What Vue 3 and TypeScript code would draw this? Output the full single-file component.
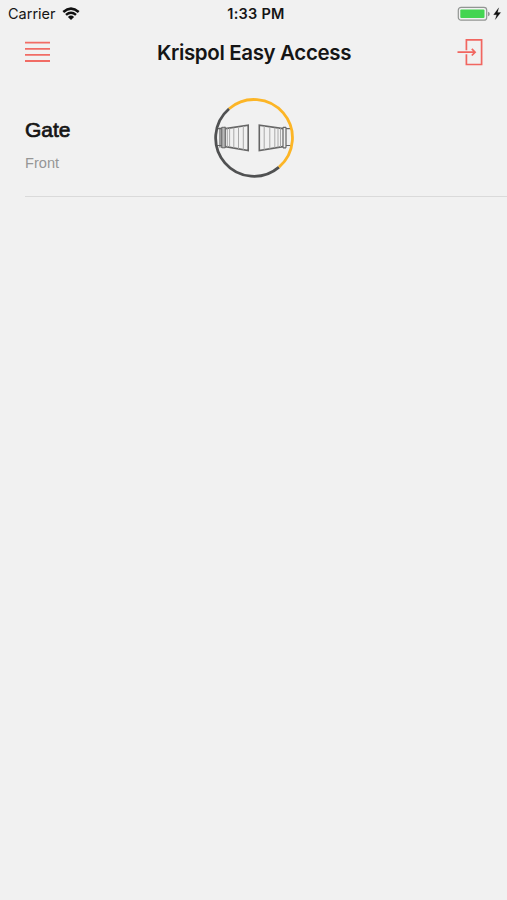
<script setup lang="ts">
interface Device {
  name: string
  location: string
}

const carrier: string = 'Carrier'
const time: string = '1:33 PM'
const title: string = 'Krispol Easy Access'
const devices: Device[] = [{ name: 'Gate', location: 'Front' }]
</script>

<template>
  <main class="screen">
    <div class="status">
      <div class="network">
        <span class="carrier">{{ carrier }}</span>
        <svg class="wifi" width="18" height="14" viewBox="0 0 18 14">
          <path d="M1.3 5Q9 -1.7 16.7 5M4 7.9Q9 3.7 14 7.9" fill="none" stroke="#111" stroke-width="2.5" />
          <path d="M5.9 9.9Q9 7.2 12.1 9.9L9 13Z" fill="#111" />
        </svg>
      </div>
      <span class="time">{{ time }}</span>
      <svg class="battery" width="46" height="16" viewBox="0 0 46 16">
        <rect x="1.3" y="1.4" width="28.4" height="12.8" rx="2.8" fill="#f1f1f1" stroke="#929593" stroke-width="1.2" />
        <rect x="3.3" y="3.5" width="24.2" height="8.6" rx="1" fill="#43d551" />
        <path d="M31 5.7Q32.8 6.2 32.8 8T31 10.3Z" fill="#929593" />
        <path d="M41.7 1.8L36.6 8.7H39.7L38.3 13.5L43.7 6.5H40.5Z" fill="#111" stroke="#111" stroke-width=".2" />
      </svg>
    </div>

    <header class="navbar">
      <button class="icon-button" aria-label="Menu">
        <svg width="25" height="22" viewBox="0 0 25 22">
          <path d="M0 1.7H25M0 7.8H25M0 13.9H25M0 20H25" stroke="#f16c65" stroke-width="1.8" />
        </svg>
      </button>
      <h1 class="title">{{ title }}</h1>
      <button class="icon-button" aria-label="Exit">
        <svg width="27" height="28" viewBox="0 0 27 28">
          <path d="M9.4 12.2V1.9H24.6V26.5H9.4V16.2M.5 14.2H18M14.8 10.9L18.1 14.2L14.8 17.5" fill="none" stroke="#f16660" stroke-width="1.7" />
        </svg>
      </button>
    </header>

    <section class="devices">
      <article v-for="device in devices" :key="device.name" class="device">
        <div class="labels">
          <h2 class="name">{{ device.name }}</h2>
          <p class="location">{{ device.location }}</p>
        </div>
        <svg class="gate" width="80" height="80" viewBox="0 0 80 80">
          <g fill="none" stroke="#656565">
            <path d="M2 30.7H8M2 47.5H8M6 29.5V49.5M11 28.8V50M8 29.2V50" stroke-width="1.2" />
            <path d="M7.8 29.3H11.2V49.8H7.8Z" fill="#b8b8b8" stroke-width="1" />
            <path d="M11.5 30.6L34.2 27.1V52.5L11.5 48.6" stroke-width="1.6" />
            <path d="M78 30.7H72M78 47.5H72M72 29.3V49.8M69 29.3V49.8M69 29.3H72M69 49.8H72" stroke-width="1.2" />
            <path d="M69 30.6L45.3 27.1V52.5L69 48.6" stroke-width="1.6" />
            <path d="M13.3 30.3V49M15.6 30.3V49M19.8 29.7V49.8M24.5 28.9V50.8M29.3 28.1V51.8M50.2 28.1V51.8M55.8 28.9V50.8M60.8 29.7V49.8M64 30.1V49.3M66.5 30.3V49" stroke="#a9a9a9" stroke-width="1" />
          </g>
          <path d="M65 69.1A38.4 38.4 0 0 1 15.1 10.7" fill="none" stroke="#505152" stroke-width="2.8" />
          <path d="M15.1 10.7A38.4 38.4 0 0 1 65 69.1" fill="none" stroke="#fcb526" stroke-width="2.8" />
        </svg>
      </article>
    </section>
  </main>
</template>

<style>
body {
  margin: 0;
  background: #f1f1f1;
}
</style>

<style scoped>
.screen {
  min-height: 900px;
  background: #f1f1f1;
  color: #151515;
  font-family: Inter, "Liberation Sans", sans-serif;
}

.status {
  display: grid;
  grid-template-columns: 1fr auto 1fr;
  align-items: center;
  height: 27px;
  padding: 0 3px 0 8px;
}

.network {
  display: flex;
  align-items: center;
  gap: 6px;
}

.carrier {
  font-size: 14.5px;
  line-height: 18px;
}

.time {
  font-size: 14.5px;
  font-weight: 600;
  line-height: 18px;
  letter-spacing: 0.25px;
}

.battery {
  justify-self: end;
  margin-right: 1px;
}

.navbar {
  display: flex;
  align-items: center;
  justify-content: space-between;
  height: 50px;
  padding: 0 23px 0 25px;
}

.icon-button {
  display: flex;
  padding: 0;
  border: 0;
  background: none;
}

.title {
  margin: 0;
  padding: 2px 0 0 1px;
  font-size: 20.5px;
  font-weight: 600;
  line-height: 26px;
  letter-spacing: -0.36px;
}

.device {
  display: grid;
  grid-template-columns: 189px 80px;
  height: 119px;
  margin-left: 25px;
  border-bottom: 1px solid #dadada;
}

.labels {
  padding-top: 40px;
  font-family: "Liberation Sans", Arial, sans-serif;
}

.name {
  margin: 0;
  font-size: 21px;
  font-weight: 400;
  line-height: 26px;
  -webkit-text-stroke: 0.7px #151515;
}

.location {
  margin: 10px 0 0;
  color: #969696;
  font-size: 14.6px;
  line-height: 20px;
}

.gate {
  margin-top: 21px;
}
</style>
